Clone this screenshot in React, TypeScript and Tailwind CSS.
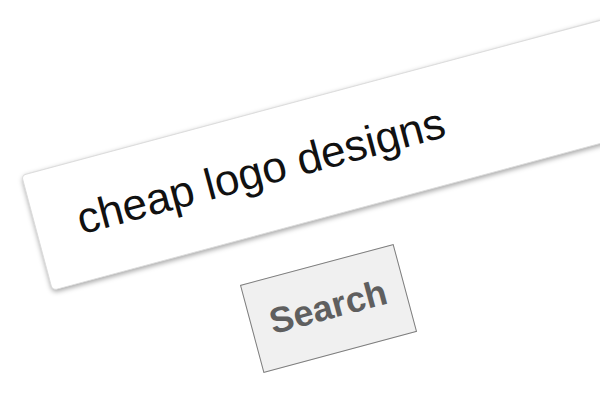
export default function App() {
  return (
    <div className="w-[600px] h-[400px] overflow-hidden bg-white pl-[21px] pt-[175px] font-['Liberation_Sans',Arial,sans-serif]">
      <div className="w-[720px] origin-top-left -rotate-[15deg] flex flex-col items-start">
        {/* search field */}
        <div className="w-[720px] h-[120px] flex items-center pl-[42px] pb-1 bg-white border border-[#dcdcdc] rounded-[5px] shadow-[0_2px_5px_rgba(0,0,0,0.35)]">
          <span className="text-[44px] text-[#111]">cheap logo designs</span>
        </div>

        {/* button */}
        <button className="ml-[183px] mt-[43px] w-[159px] h-[91px] flex items-center justify-center pb-1 bg-[#f0f0f0] border-[1.5px] border-[#7d7d7d] shadow-[0_0_12px_rgba(255,255,255,0.9)]">
          <span className="text-[36px] font-bold text-[#5f5f5f]">Search</span>
        </button>
      </div>
    </div>
  );
}
